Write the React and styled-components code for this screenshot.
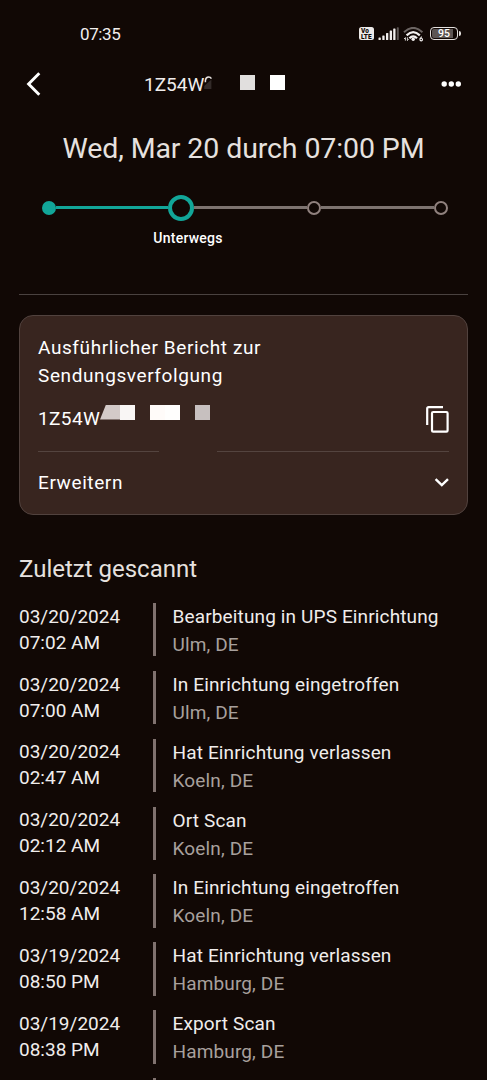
import React from 'react'
import styled, { createGlobalStyle } from 'styled-components'

const steps = [
  { name: 'label', state: 'done' },
  { name: 'transit', state: 'current' },
  { name: 'delivery', state: 'open' },
  { name: 'delivered', state: 'open' },
]

const scans = [
  { date: '03/20/2024', time: '07:02 AM', title: 'Bearbeitung in UPS Einrichtung', place: 'Ulm, DE' },
  { date: '03/20/2024', time: '07:00 AM', title: 'In Einrichtung eingetroffen', place: 'Ulm, DE' },
  { date: '03/20/2024', time: '02:47 AM', title: 'Hat Einrichtung verlassen', place: 'Koeln, DE' },
  { date: '03/20/2024', time: '02:12 AM', title: 'Ort Scan', place: 'Koeln, DE' },
  { date: '03/20/2024', time: '12:58 AM', title: 'In Einrichtung eingetroffen', place: 'Koeln, DE' },
  { date: '03/19/2024', time: '08:50 PM', title: 'Hat Einrichtung verlassen', place: 'Hamburg, DE' },
  { date: '03/19/2024', time: '08:38 PM', title: 'Export Scan', place: 'Hamburg, DE' },
  { date: '', time: '', title: '', place: '' },
]

const SignalIcon = () => (
  <svg width="21" height="14" viewBox="0 0 21 14">
    <g fill="#f2efee">
      <rect x="0.5" y="10.5" width="2.3" height="2.5" rx="0.6" />
      <rect x="4.3" y="8.5" width="2.3" height="4.5" rx="0.6" />
      <rect x="8" y="6" width="2.3" height="7" rx="0.6" />
      <rect x="11.7" y="3.5" width="2.3" height="9.5" rx="0.6" />
      <rect x="15.2" y="1.5" width="2.3" height="11.5" rx="0.6" />
    </g>
    <rect x="18.8" y="0.3" width="2" height="12.7" rx="0.6" fill="#5d5654" />
  </svg>
)

const WifiIcon = () => (
  <svg width="22" height="17" viewBox="0 0 22 17">
    <g fill="none" strokeLinecap="butt">
      <path d="M1 5.2 Q10.2 -3.4 19.4 5.2" stroke="#6b6462" strokeWidth="2" />
      <path d="M3.6 8.4 Q10.2 1.8 16.8 8.4" stroke="#f2efee" strokeWidth="2.2" />
      <path d="M6.4 11.2 Q10.2 7.4 14 11.2" stroke="#f2efee" strokeWidth="2.2" />
    </g>
    <circle cx="10.2" cy="12.3" r="1.7" fill="#f2efee" />
    <path d="M2.4 13.6V10.6L1 12M4.4 10.4V13.6L5.6 12.3" stroke="#d8d4d2" strokeWidth="1" fill="none" />
    <path d="M18.7 9.6L16.9 12" stroke="#f2efee" strokeWidth="1.1" />
    <circle cx="18.2" cy="12.6" r="1.3" stroke="#f2efee" strokeWidth="1.1" fill="none" />
  </svg>
)

const BackIcon = () => (
  <svg width="16" height="24" viewBox="0 0 16 24">
    <path d="M13.3 1.3L2.6 12L13.3 22.7" fill="none" stroke="#fff" strokeWidth="2.9" />
  </svg>
)

const MoreIcon = () => (
  <svg width="20" height="6" viewBox="0 0 20 6" fill="#fff">
    <circle cx="3.2" cy="3" r="2.7" />
    <circle cx="10.3" cy="3" r="2.7" />
    <circle cx="17.3" cy="3" r="2.7" />
  </svg>
)

// remainder of the masked digit after the W
const MaskEdge = () => (
  <svg width="10" height="14" viewBox="0 0 10 14">
    <path d="M7.4 3.6V13H0.2V10Z" fill="#332b29" />
    <path d="M1.4 6.2V4.4Q1.8 1.2 4.6 1.1Q6.4 1 7.4 2.6" fill="none" stroke="#e6e1df" strokeWidth="1.5" />
  </svg>
)

const CopyIcon = () => (
  <svg width="24" height="28" viewBox="0 0 24 28" fill="none" stroke="#fff" strokeWidth="2.2">
    <path d="M2.2 20V3.6Q2.2 2.2 3.6 2.2H18" />
    <rect x="7" y="7" width="15.6" height="19.6" rx="1.2" />
  </svg>
)

const ChevronIcon = () => (
  <svg width="15" height="10" viewBox="0 0 15 10">
    <path d="M1.6 2.2L7.8 8.2L14 2.2" fill="none" stroke="#fff" strokeWidth="2.4" />
  </svg>
)

const App = () => {
  return (
    <>
      <GlobalStyle />
      <Screen>
        <StatusBar>
          <Clock>07:35</Clock>
          <StatusIcons>
            <Volte><span>Vo</span><span>LTE</span></Volte>
            <SignalIcon />
            <WifiIcon />
            <Battery><Charge>95</Charge></Battery>
          </StatusIcons>
        </StatusBar>

        <Header>
          <BackIcon />
          <HeaderNumber>1Z54W<MaskEdge /></HeaderNumber>
          <HeaderMask>
            <Block color="#e1dfde" />
            <Block color="#ffffff" />
          </HeaderMask>
          <MoreIcon />
        </Header>

        <Arrival>Wed, Mar 20 durch 07:00 PM</Arrival>

        <Progress>
          {steps.map((step, index) => (
            <React.Fragment key={step.name}>
              {index > 0 && <Track $done={index === 1} />}
              <Dot $state={step.state} />
            </React.Fragment>
          ))}
        </Progress>
        <StepLabel>Unterwegs</StepLabel>

        <Divider />

        <Card>
          <CardTitle>Ausführlicher Bericht zur Sendungsverfolgung</CardTitle>
          <NumberRow>
            <CardNumber>1Z54W</CardNumber>
            <CardMask>
              <SlantBlock color="#d3cac8" />
              <Block color="#f9f6f5" />
              <Gap />
              <Block color="#fffbf9" />
              <Block color="#fffefd" />
              <Gap />
              <Block color="#c7c0bf" />
            </CardMask>
            <CopyIcon />
          </NumberRow>
          <CardRule>
            <RulePart />
            <RulePart />
          </CardRule>
          <ExpandRow>
            <span>Erweitern</span>
            <ChevronIcon />
          </ExpandRow>
        </Card>

        <SectionTitle>Zuletzt gescannt</SectionTitle>
        <ScanList>
          {scans.map((scan, index) => (
            <ScanRow key={index}>
              <ScanDate>
                <div>{scan.date}</div>
                <div>{scan.time}</div>
              </ScanDate>
              <ScanInfo>
                <ScanTitle>{scan.title}</ScanTitle>
                <ScanPlace>{scan.place}</ScanPlace>
              </ScanInfo>
            </ScanRow>
          ))}
        </ScanList>
      </Screen>
    </>
  )
}

export default App


const GlobalStyle = createGlobalStyle`
  *{
    box-sizing:border-box;
  }
  body{
    margin:0;
    background:#110805;
    overflow:hidden;
  }
  svg{
    display:block;
    flex:none;
  }
`
const Screen = styled.div`
  width:487px;
  height:1080px;
  overflow:hidden;
  display:flex;
  flex-direction:column;
  background:#110805;
  color:#f0edec;
  font-family:Roboto, sans-serif;
  font-weight:400;
`

const StatusBar = styled.div`
  flex:none;
  height:60px;
  padding:24px 26px 0 80px;
  display:flex;
  justify-content:space-between;
  align-items:flex-start;
`
const Clock = styled.div`
  font-size:17px;
  line-height:21px;
  letter-spacing:-0.4px;
  color:#f2efee;
`
const StatusIcons = styled.div`
  display:flex;
  align-items:flex-start;
  padding-top:3px;
  gap:4px;
`
const Volte = styled.div`
  width:15px;
  height:13px;
  border-radius:2.5px;
  background:#ece9e8;
  color:#110805;
  font-size:6.5px;
  font-weight:900;
  line-height:6px;
  padding:1px 0 0 2px;
  display:flex;
  flex-direction:column;
`
const Battery = styled.div`
  position:relative;
  width:28px;
  height:13px;
  border:1.5px solid #e4e0de;
  border-radius:4px;
  padding:1px;
  margin:0 3px 0 1px;
  &::after{
    content:'';
    position:absolute;
    right:-4px;
    top:3px;
    width:2px;
    height:5px;
    border-radius:0 2px 2px 0;
    background:#e4e0de;
  }
`
const Charge = styled.div`
  height:9px;
  border-radius:2px;
  background:linear-gradient(to right, #5c5553 88%, #110805 88%);
  color:#fff;
  font-size:10.5px;
  font-weight:500;
  line-height:9.5px;
  text-align:center;
`

const Header = styled.div`
  flex:none;
  height:48px;
  padding:0 26px 0 25.7px;
  display:flex;
  align-items:center;
`
const HeaderNumber = styled.div`
  display:flex;
  width:96px;
  margin-left:102.3px;
  font-size:19px;
  line-height:24px;
  padding-top:2px;
  svg{
    margin-top:3px;
  }
`
const HeaderMask = styled.div`
  flex:1;
  display:flex;
  gap:15px;
  margin-top:-3px;
`
const Block = styled.div`
  width:15.1px;
  height:15px;
  background:${props=>props.color};
`
const SlantBlock = styled(Block)`
  width:20px;
  clip-path:polygon(30% 0, 100% 0, 100% 100%, 0 100%);
`
const Gap = styled.div`
  width:15px;
`

const Arrival = styled.div`
  flex:none;
  height:40px;
  margin-top:21px;
  text-align:center;
  font-size:28.5px;
  line-height:40px;
  letter-spacing:-0.1px;
  color:#e6e1df;
`

const Progress = styled.div`
  flex:none;
  height:26px;
  margin:25.5px 39px 0 41.5px;
  display:flex;
  align-items:center;
`
const Track = styled.div`
  flex:1;
  height:${props=>props.$done ? '3px' : '2.5px'};
  background:${props=>props.$done ? '#12a699' : '#7d7370'};
`
const Dot = styled.div`
  width:${props=>props.$state === 'current' ? '26px' : '14px'};
  height:${props=>props.$state === 'current' ? '26px' : '14px'};
  border-radius:50%;
  border:${props=>props.$state === 'current' ? '4.5px' : '2px'} solid ${props=>props.$state === 'open' ? '#90817e' : '#12a699'};
  background:${props=>props.$state === 'done' ? '#12a699' : 'transparent'};
`
const StepLabel = styled.div`
  flex:none;
  width:100px;
  margin:7.5px 0 0 138px;
  text-align:center;
  font-size:14px;
  font-weight:500;
  line-height:20px;
  letter-spacing:0.25px;
  color:#fff;
`

const Divider = styled.div`
  flex:none;
  height:1px;
  margin:46px 19px 0;
  background:#4a4240;
`

const Card = styled.div`
  flex:none;
  height:200px;
  margin:19.5px 19px 0;
  padding:18px 18px 0;
  border:1px solid #51423e;
  border-radius:14px;
  background:#38251f;
  color:#fff;
  font-size:19px;
  letter-spacing:0.6px;
`
const CardTitle = styled.div`
  width:300px;
  line-height:28.5px;
`
const NumberRow = styled.div`
  display:flex;
  height:44px;
  padding-top:14px;
`
const CardNumber = styled.div`
  width:62px;
  line-height:27px;
  letter-spacing:0.4px;
`
const CardMask = styled.div`
  flex:1;
  display:flex;
`
const CardRule = styled.div`
  display:flex;
  justify-content:space-between;
  padding-top:16px;
`
const RulePart = styled.div`
  width:121px;
  height:1px;
  background:#54443f;
  & + &{
    width:232px;
  }
`
const ExpandRow = styled.div`
  display:flex;
  justify-content:space-between;
  align-items:center;
  height:61px;
`

const SectionTitle = styled.div`
  flex:none;
  height:32px;
  margin:38.3px 19px 0;
  font-size:24px;
  line-height:32px;
  color:#e6e1df;
`
const ScanList = styled.div`
  padding:18.2px 19px 0;
`
const ScanRow = styled.div`
  display:flex;
  height:53.5px;
  margin-bottom:14.35px;
`
const ScanDate = styled.div`
  width:134px;
  padding-top:0.7px;
  font-size:19px;
  line-height:26px;
  color:#f0edec;
`
const ScanInfo = styled.div`
  border-left:3px solid #80726f;
  padding-left:16.5px;
  font-size:19px;
  line-height:28px;
  letter-spacing:0.14px;
`
const ScanTitle = styled.div`
  height:28px;
  color:#f0edec;
`
const ScanPlace = styled.div`
  color:#a8a09d;
`
